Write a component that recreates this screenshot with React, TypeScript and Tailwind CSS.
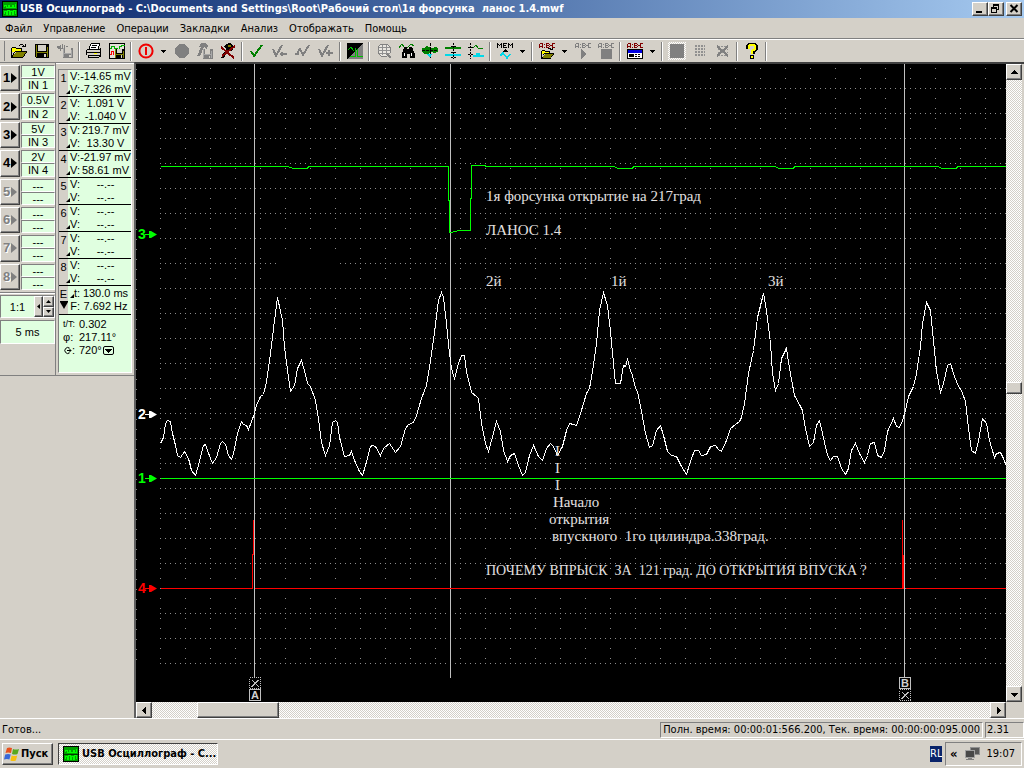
import React from "react";

const raised =
  "border border-t-white border-l-white border-b-[#404040] border-r-[#404040] shadow-[inset_-1px_-1px_0_#808080] bg-[#d4d0c8]";
const sunken = "border border-t-[#808080] border-l-[#808080] border-b-white border-r-white";
const dither = "bg-[repeating-conic-gradient(#ffffff_0_25%,#d4d0c8_0_50%)] bg-[length:2px_2px]";

/* ---------- icons ---------- */

function Icon({ children, size = 16 }: { children: React.ReactNode; size?: number }) {
  return (
    <svg width={size} height={size} viewBox="0 0 16 16" shapeRendering="crispEdges" fill="none" className="shrink-0" aria-hidden="true">
      {children}
    </svg>
  );
}

function Floppy({ c = "#000", fill = "#808000", x = 0, y = 0, s = 1 }: { c?: string; fill?: string; x?: number; y?: number; s?: number }) {
  return (
    <g transform={`translate(${x} ${y}) scale(${s})`}>
      <path d="M1 1h14v14H2l-1-1z" fill={c} />
      <path d="M2 2h1v12H2zM13 4h1v10h-1z M3 9h10v1H3z" fill={fill} />
      <path d="M4 2h8v6H4z" fill="#d4d0c8" />
      <path d="M10 11h2v3h-2z" fill="#d4d0c8" />
    </g>
  );
}

const abc = (c: string) => (
  <path
    fill={c}
    d="M1 0h2v1H1zM0 1h1v4H0zM3 0h1v5H3zM0 3h4v1H0zM5 1h1v1H5zM5 4h1v1H5zM7 0h1v5H7zM8 0h2v1H8zM8 2h2v1H8zM8 4h2v1H8zM10 1h1v1h-1zM10 3h1v1h-1zM11 2h2v1h-2zM13 0h3v1h-3zM13 0h1v5h-1zM13 4h3v1h-3z"
  />
);

const openFolder = (
  <>
    <path d="M1 5h4l1 1h5v3H1z" fill="#ffff00" />
    <path d="M1 4h4v1h6v4h-1V6H5V5H1zM0 5h1v9H0z" fill="#000" />
    <path d="M5 9h11l-4 5H1z" fill="#808000" />
    <path d="M4 8h12v1H4zM3 9h1v1H3zM2 10h1v2H2zM1 12h1v2H1zM0 14h12v1H0zM15 9h1v1h-1zM14 10h1v1h-1zM13 11h1v2h-1zM12 13h1v1h-1z" fill="#000" />
    <path d="M9 1h3v1H9zM8 2h1v1H8zM12 2h1v1h-1zM11 3h4v1h-4zM14 1h1v3h-1z" fill="#000" />
  </>
);

const icons: Record<string, React.ReactNode> = {
  open: openFolder,
  save: <Floppy />,
  saveAs: (
    <>
      <path d="M0 3h4v2H0zM3 2h1v6H3zM5 1h1v4H5zM7 2h1v4H7zM1 5h6v1H1zM9 3h2v1H9z" fill="#808080" />
      <Floppy c="#808080" fill="#a8a8a8" x={5} y={4} s={0.72} />
    </>
  ),
  print: (
    <>
      <path d="M5 1h8v1l-1 4H3z" fill="#fff" />
      <path d="M5 0h9v1H5zM4 1h1v2H4zM3 3h1v3H3zM13 1h1v2h-1zM12 3h1v3h-1zM6 2h5v1H6zM5 4h5v1H5z" fill="#000" />
      <path d="M1 6h13v6H1z" fill="#d4d0c8" />
      <path d="M1 6h13v1H1zM0 7h1v5H0zM14 5h1v7h-1zM0 9h15v1H0zM2 12h12v1H2zM2 13h1v1H2zM2 14h11v1H2zM13 12h2v2h-2z" fill="#000" />
      <path d="M8 10h3v1H8z" fill="#ffff00" />
    </>
  ),
  printSave: (
    <>
      <path d="M0 0h16v16H0z" fill="#000" />
      <path d="M1 1h14v14H1z" fill="#e4e0d8" />
      <path d="M1 5.500h1.500v-2h3v2h3v1h2v-3h2v-1h3" stroke="#00b000" />
      <path d="M1 11.500h1.500v-3h2v3" stroke="#ff0000" />
      <Floppy x={5} y={5} s={0.68} />
    </>
  ),
  power: (
    <g shapeRendering="auto">
      <circle cx="8" cy="8" r="6.6" stroke="#f00000" strokeWidth="2" />
      <path d="M8 4v8" stroke="#f00000" strokeWidth="2" />
    </g>
  ),
  record: <circle cx="8" cy="8" r="7" fill="#808080" />,
  hammer: (
    <>
      <path d="M4 0h4l3 3-1 3-3-2-4 9H0l4-9H2z" fill="#808080" />
      <Floppy c="#808080" fill="#a8a8a8" x={5} y={5} s={0.7} />
    </>
  ),
  hammerX: (
    <>
      <path d="M6 1l4-1 4 4-2 4-3-2-5 9H1l5-9-2-2z" fill="#000" />
      <path d="M8 2h3v2H8zM5 8h2v2H5z" fill="#808000" />
      <path d="M1 4l13 11M15 3L2 13" stroke="#800000" strokeWidth="2" />
    </>
  ),
  check: <path d="M2 8l3 5 8-11" stroke="#008000" strokeWidth="2" />,
  check1: (
    <g stroke="#808080" strokeWidth="2">
      <path d="M1 6l3 7 6-11" />
      <path d="M8 11h7M10 9v4" />
    </g>
  ),
  check2: (
    <g stroke="#808080" strokeWidth="2">
      <path d="M0 11h4M2 11l3-6" />
      <path d="M5 6l3 6 6-10" />
    </g>
  ),
  check3: (
    <g stroke="#808080" strokeWidth="2">
      <path d="M1 6l3 7 6-11" />
      <path d="M8 10h7M11 7v6" />
    </g>
  ),
  invert: (
    <>
      <path d="M0 0h16v16H0z" fill="#000" />
      <path d="M16 0v16H0z" fill="#808080" />
      <path d="M1 7l3-3 3 4M3 13.500h5.500V5M10.500 6v7.500h5" stroke="#00c000" />
    </>
  ),
  globe: (
    <>
      <path d="M5 1h6l3 3v6l-3 3H5l-3-3V4z" stroke="#808080" fill="#e8e6e0" />
      <path d="M3 4.500h11M2 7.500h12M3 10.500h11M6.500 2v10M10.500 2v10" stroke="#909090" />
      <path d="M11 11l4 4" stroke="#808080" strokeWidth="2" />
    </>
  ),
  find: (
    <>
      <path d="M0 5l3-4 3 4 3-1 3-3 3 2" stroke="#008000" />
      <path d="M5 4h3v2h2V4h3l3 7v4h-5v-4H8v4H3v-4z" fill="#000" />
      <path d="M5 10h1v3H5zM12 10h1v3h-1z" fill="#fff" />
    </>
  ),
  spread: (
    <>
      <path d="M0 5h3l1-2 3 1 2 1h2l2-1 3 1v4l-4 1-3-1-3 2H2L0 8z" fill="#008000" />
      <path d="M0 7.500h16M8.500 0v16" stroke="#000" strokeDasharray="3 1" />
      <path d="M5 11h5l-2 4z" fill="#00d8e8" />
    </>
  ),
  levels: (
    <>
      <path d="M0 5h16" stroke="#008000" strokeWidth="2" />
      <path d="M0 12h16" stroke="#00d8e8" strokeWidth="2" />
      <path d="M8.500 0v16M6 3.500h5M6 9.500h5M6 14.500h5" stroke="#000" strokeDasharray="2 1" />
    </>
  ),
  waves: (
    <>
      <path d="M2.500 0v16M0 4.500h5M0 11.500h5" stroke="#000" strokeDasharray="2 1" />
      <path d="M5 5l3-3 3 4 4-1" stroke="#008000" />
      <path d="M5 13h4v-2h2v2h5" stroke="#00d8e8" strokeWidth="2" />
    </>
  ),
  mem: (
    <>
      <path d="M0 0h1v5H0zM1 1h1v1H1zM2 2h1v1H2zM3 1h1v1H3zM4 0h1v5H4zM6 0h4v1H6zM6 0h1v5H6zM6 2h3v1H6zM6 4h4v1H6zM11 0h1v5h-1zM12 1h1v1h-1zM13 2h1v1h-1zM14 1h1v1h-1zM15 0h1v5h-1z" fill="#000" />
      <path d="M8 6l3 3H5z" fill="#000" />
      <path d="M3 13l3-3 4 5 3-4" stroke="#00d8e8" strokeWidth="1.500" />
    </>
  ),
  abcOpen: (
    <>
      {abc("#800000")}
      <g transform="translate(2 4) scale(.8)">{openFolder}</g>
    </>
  ),
  abcPlay: (
    <>
      {abc("#808080")}
      <path d="M6 6l6 5-6 5z" fill="#808080" />
    </>
  ),
  abcStop: (
    <>
      {abc("#808080")}
      <path d="M3 6h11v10H3z" fill="#808080" />
    </>
  ),
  abcPanel: (
    <>
      {abc("#800000")}
      <path d="M0 6h16v10H0z" fill="#000" />
      <path d="M1 7h14v3H1z" fill="#0000e0" />
      <path d="M1 10h14v5H1z" fill="#fff" />
      <path d="M2 11h5v3H2zM8 11h2v1H8zM11 11h2v1h-2zM8 13h2v1H8zM11 13h2v1h-2z" fill="#000" />
    </>
  ),
  block: <path d="M1 1h14v14H1z" fill="#808080" />,
  hatch: <path d="M3 3h10M3 6h10M3 9h10M3 12h10" stroke="#909090" strokeWidth="2" strokeDasharray="2 1" />,
  hatchX: (
    <>
      <path d="M3 3.500h10M3 6.500h10M3 9.500h10M3 12.500h10" stroke="#909090" strokeDasharray="2 1" />
      <path d="M2 3l11 10M13 3L2 13" stroke="#808080" strokeWidth="2" />
    </>
  ),
  help: (
    <>
      <path d="M4 6V3l2-2h4l2 2v3L9 9v2" stroke="#000" strokeWidth="4" />
      <path d="M5 6V3l1-1h4l1 1v3L8 8v3" stroke="#ffff00" strokeWidth="2" />
      <path d="M6 12h4v4H6z" fill="#000" />
      <path d="M7 13h2v2H7z" fill="#ffff00" />
    </>
  ),
  app: (
    <>
      <path d="M0 0h16v16H0z" fill="#000" />
      <path d="M1 1h14v14H1z" fill="#00a000" />
      <path d="M2 6V4h2v2h2V4h1v2h3V4h1v2h2V3M2 13v-3h2v3h1v-4h2v4h1v-3h2v3h1v-4h2v4" stroke="#00ff00" />
      <path d="M1 8h14" stroke="#003800" />
    </>
  ),
};

const toolbar: Array<[string, string] | "|" | "v"> = [
  ["open", "Открыть"], ["save", "Сохранить"], ["saveAs", "Сохранить как"], "|",
  ["print", "Печать"], ["printSave", "Сохранить изображение"], "|",
  ["power", "Пуск"], "v", ["record", "Запись"], ["hammer", "Настройки"], ["hammerX", "Сброс"], "|",
  ["check", "Закладка"], ["check1", "Удалить закладку"], ["check2", "Предыдущая закладка"], ["check3", "Следующая закладка"], "|",
  ["invert", "Инверсия"], "|",
  ["globe", "Масштаб"], ["find", "Поиск"], ["spread", "Растянуть"], ["levels", "Уровни"], ["waves", "Разделить"], "|",
  ["mem", "Память"], "v", "|",
  ["abcOpen", "Открыть анализатор"], "v", ["abcPlay", "Старт анализа"], ["abcStop", "Стоп анализа"], "|",
  ["abcPanel", "Панель анализа"], "v", "|",
  ["block", "Сплошной"], ["hatch", "Сетка"], ["hatchX", "Без сетки"], "|",
  ["help", "Справка"], "|",
];

/* ---------- data ---------- */

const channels = [
  ["1V", "IN 1"], ["0.5V", "IN 2"], ["5V", "IN 3"], ["2V", "IN 4"],
  ["---", "---"], ["---", "---"], ["---", "---"], ["---", "---"],
];

const readings = [
  ["-14.65 mV", "-7.326 mV"], ["1.091 V", "-1.040 V"], ["219.7 mV", "13.30 V"], ["-21.97 mV", "58.61 mV"],
  ["--.--", "--.--"], ["--.--", "--.--"], ["--.--", "--.--"], ["--.--", "--.--"],
];

const pressure =
  "160,443 163,437 165,423 167,420 170,421 172,433 175,445 177,455 180,457 184,451 188,458 191,470 195,475 197,468 200,457 203,445 205,444 207,450 212,463 216,457 220,443 222,441 225,444 228,455 231,459 233,453 237,433 241,421 243,424 246,425 248,429 251,421 254,413 256,405 260,396 263,394 266,381 270,353 274,320 277,297 282,320 284,347 288,377 290,391 294,385 297,368 301,360 304,370 307,383 310,386 315,400 318,418 321,442 325,455 329,445 332,422 335,420 337,422 339,437 344,456 349,455 351,451 354,460 359,471 362,475 365,465 370,446 372,445 375,446 380,455 383,448 389,443 395,452 400,446 405,428 408,424 413,422 416,415 421,398 426,385 430,360 434,332 438,300 441,292 443,297 446,323 449,353 451,368 454,378 458,363 461,355 464,355 466,371 471,392 476,396 478,398 481,423 485,443 488,451 491,440 496,421 500,431 503,450 507,461 510,455 514,453 518,465 522,475 525,472 529,455 533,445 538,456 542,460 546,448 550,443 553,446 557,455 562,446 566,430 569,423 573,424 576,425 580,413 586,393 589,388 592,371 596,343 599,310 603,292 607,305 610,331 613,363 615,383 620,383 623,365 625,366 627,359 630,370 632,375 635,388 637,391 641,411 645,433 649,447 652,445 656,430 660,425 663,435 667,451 671,455 676,456 681,466 686,474 690,461 694,450 698,450 701,455 706,454 710,446 715,445 718,449 721,451 726,440 730,428 735,424 739,421 741,417 744,403 748,373 753,350 757,317 763,293 766,310 770,343 772,373 775,390 778,383 781,358 786,348 789,368 794,395 800,406 802,410 805,428 809,446 813,442 816,425 819,420 822,433 827,455 830,460 833,456 837,456 841,468 845,474 848,468 851,450 855,443 859,453 864,462 867,455 870,443 874,442 877,455 881,457 884,450 887,431 893,418 896,426 899,427 902,420 905,410 908,396 913,386 916,373 920,346 922,323 926,302 930,310 933,340 936,371 940,392 943,383 947,365 950,363 954,376 958,386 961,390 965,401 968,428 971,450 975,453 978,440 982,418 986,423 989,440 994,457 996,453 1000,452 1003,458 1006,466";

const injector =
  "160,166 287,166 293,168 307,168 308,166 448,166 448,200 449,200 449,232 451,232 458,230 470,230 470,198 471,198 471,165 485,165 485,166 613,166 618,168 632,168 633,166 774,166 779,168 793,168 794,166 937,166 942,168 956,168 957,166 1006,166";

const notes: Array<[number, number, string]> = [
  [486, 201, "1я форсунка открытие на 217град"],
  [486, 235, "ЛАНОС 1.4"],
  [486, 286, "2й"],
  [611, 286, "1й"],
  [768, 286, "3й"],
  [555, 456, "I"],
  [555, 473, "I"],
  [555, 490, "I"],
  [553, 507, "Начало"],
  [549, 524, "открытия"],
  [552, 541, "впускного  1го цилиндра.338град."],
];

const question: [number, number, string] = [486, 575, "ПОЧЕМУ ВПРЫСК  ЗА  121 град. ДО ОТКРЫТИЯ ВПУСКА ?"];

const markers: Array<[number, string, string]> = [
  [234, "3", "#00ff00"], [414, "2", "#ffffff"], [478, "1", "#00ff00"], [588, "4", "#ff0000"],
];

function Flag({ x, y, label }: { x: number; y: number; label?: string }) {
  return (
    <g>
      <g stroke="#c0c0c0" fill="none" shapeRendering="crispEdges">
        <rect x={x + 0.5} y={y + 0.5} width="11" height="11" rx={label ? 1 : 0} strokeDasharray={label ? undefined : "1 1"} />
        {!label && <path d={`M${x + 3} ${y + 3}l7 7M${x + 9.5} ${y + 3}l-7 7`} />}
      </g>
      {label && (
        <text x={x + 6} y={y + 10} textAnchor="middle" fill="#d0d0d0" className="font-['Liberation_Sans',sans-serif] text-[11px] font-bold">
          {label}
        </text>
      )}
    </g>
  );
}

function Scope() {
  return (
    <svg className="block h-full w-full bg-black" role="img" aria-label="Осциллограмма">
      <defs>
        <pattern id="grid" x="160" y="88" width="25" height="50" patternUnits="userSpaceOnUse">
          <path
            fill="#8c8c8c"
            d="M0 0h1v1H0zM5 0h1v1H5zM10 0h1v1H10zM15 0h1v1H15zM20 0h1v1H20zM0 25h1v1H0zM5 25h1v1H5zM10 25h1v1H10zM15 25h1v1H15zM20 25h1v1H20zM0 10h1v1H0zM0 20h1v1H0zM0 30h1v1H0zM0 40h1v1H0z"
          />
        </pattern>
        <pattern id="ruler" x="136" y="64" width="10" height="10" patternUnits="userSpaceOnUse">
          <path fill="#808080" d="M0 5h1v1H0z" />
        </pattern>
      </defs>
      <g transform="translate(-136 -64)">
        <rect x="160" y="64" width="100%" height="600" fill="url(#grid)" />
        <rect x="136" y="64" width="1" height="600" fill="url(#ruler)" />
        <rect x="278" y="250" width="58" height="33" fill="#000" />
        <g shapeRendering="crispEdges" fill="none" strokeWidth="1">
          <path d="M254.500 64V678M450.500 64V678M904.500 64V678" stroke="#c0c0c0" />
          <g transform="translate(.5 .5)">
            <polyline points={injector} stroke="#00ff00" />
            <path d="M160 478H3000" stroke="#00ff00" />
            <path d="M160 588H252V554H253V519M254 588H902V554H902V519M903 554V588M905 588H3000" stroke="#ff0000" />
            <polyline points={pressure} stroke="#ffffff" />
          </g>
        </g>
        {markers.map(([y, n, c]) => (
          <g key={n} fill={c}>
            <text x="138" y={y + 5} className="font-['Liberation_Sans',sans-serif] text-[14px] font-bold">{n}</text>
            <path d={`M145 ${y}h4v-3h2l6 3.500-6 3.500h-2v-3h-4z`} />
          </g>
        ))}
        <g fill="#e4e0e0" className="font-['Liberation_Serif',serif]">
          {notes.map(([x, y, t]) => (
            <text key={`${x}-${y}`} x={x} y={y} className="text-[15px] whitespace-pre">{t}</text>
          ))}
          <text x={question[0]} y={question[1]} className="text-[14px] whitespace-pre">{question[2]}</text>
        </g>
        <Flag x={249} y={677} />
        <Flag x={249} y={689} label="A" />
        <Flag x={899} y={677} label="B" />
        <Flag x={899} y={689} />
      </g>
    </svg>
  );
}

function Arrow({ dir }: { dir: "up" | "down" | "left" | "right" }) {
  const d = {
    up: "M0 5h7L3.500 1z",
    down: "M0 2h7L3.500 6z",
    left: "M5 0v7L1 3.500z",
    right: "M2 0v7l4-3.500z",
  }[dir];
  return (
    <svg width="7" height="7" viewBox="0 0 7 7" shapeRendering="crispEdges" className="shrink-0" aria-hidden="true">
      <path d={d} fill="#000" />
    </svg>
  );
}

function ScrollButton({ dir, label }: { dir: "up" | "down" | "left" | "right"; label: string }) {
  return (
    <button aria-label={label} className={`flex size-4 shrink-0 items-center justify-center ${raised}`}>
      <Arrow dir={dir} />
    </button>
  );
}

function DeltaLabel({ children, delta }: { children: React.ReactNode; delta?: boolean }) {
  return (
    <span className="flex w-3 shrink-0 items-end justify-end">
      {delta && (
        <svg width="4" height="4" viewBox="0 0 4 4" className="mb-0.5 shrink-0" aria-hidden="true">
          <path d="M4 0v4H0z" fill="#000" />
        </svg>
      )}
      {children}
    </span>
  );
}

/* ---------- panels ---------- */

function ChannelPanel() {
  return (
    <div className="flex w-[56px] flex-col border-r border-[#808080] font-['Liberation_Sans',sans-serif] text-[11px] leading-3">
      <div className="grid h-[227px] grid-rows-8 gap-y-0.5 pt-0.5">
        {channels.map(([range, input], i) => (
          <div key={i} className="flex gap-px">
            <button
              className={`flex w-5 items-center justify-center text-[13px] font-bold ${raised} ${i < 4 ? "text-black" : "text-[#808080] [text-shadow:1px_1px_0_#fff]"}`}
            >
              {i + 1}
              <svg width="6" height="10" viewBox="0 0 6 10" className="ml-px shrink-0" aria-hidden="true">
                <path d="M0 0v10l6-5z" fill="currentColor" />
              </svg>
            </button>
            <div className="flex flex-1 flex-col text-center">
              <div className={`min-h-0 flex-1 bg-[#e0ffe0] ${sunken}`}>{range}</div>
              <div className={`min-h-0 flex-1 bg-[#e0ffe0] ${sunken}`}>{input}</div>
            </div>
          </div>
        ))}
      </div>
      <div className="mt-0.5 border-t border-b border-t-[#808080] border-b-white" />
      <div className={`mt-px flex h-[23px] bg-[#e0ffe0] ${sunken}`}>
        <span className="flex flex-1 items-center justify-center">1:1</span>
        <button aria-label="Сброс масштаба" className={`flex w-[9px] items-center justify-center ${raised}`}>
          <svg width="3" height="5" viewBox="0 0 3 5" className="shrink-0" aria-hidden="true"><path d="M3 0v5L0 2.500z" fill="#000" /></svg>
        </button>
        <div className="flex w-[11px] flex-col">
          <button aria-label="Больше" className={`flex flex-1 items-center justify-center ${raised}`}>
            <svg width="5" height="3" viewBox="0 0 5 3" aria-hidden="true"><path d="M0 3h5L2.500 0z" fill="#000" /></svg>
          </button>
          <button aria-label="Меньше" className={`flex flex-1 items-center justify-center ${raised}`}>
            <svg width="5" height="3" viewBox="0 0 5 3" aria-hidden="true"><path d="M0 0h5L2.500 3z" fill="#000" /></svg>
          </button>
        </div>
      </div>
      <div className={`mt-0.5 flex h-6 items-center justify-center bg-[#e0ffe0] ${sunken}`}>5 ms</div>
    </div>
  );
}

function ReadoutPanel() {
  return (
    <div className="flex flex-1 flex-col border-t border-white px-0.5 pt-[5px] pb-0.5 font-['Liberation_Sans',sans-serif] text-[11px]">
      <div className={`flex flex-1 flex-col bg-[#e0ffe0] leading-[13px] ${sunken}`}>
        {readings.map(([v, dv], i) => (
          <div key={i} className="flex h-[27px] border-b border-black">
            <div className="w-[9px] bg-[#d4d0c8] pt-0.5 text-center">{i + 1}</div>
            <div className="flex flex-1 flex-col whitespace-nowrap">
              <div className="flex"><DeltaLabel>V:</DeltaLabel><span className="flex-1 text-center">{v}</span></div>
              <div className="flex"><DeltaLabel delta>V:</DeltaLabel><span className="flex-1 text-center">{dv}</span></div>
            </div>
          </div>
        ))}
        <div className="flex h-[29px] border-b border-black whitespace-nowrap">
          <div className="flex w-[9px] flex-col items-center bg-[#d4d0c8] pt-0.5">
            E
            <svg width="8" height="8" viewBox="0 0 8 8" className="shrink-0" aria-hidden="true"><path d="M0 0h8v1L4 8 0 1z" fill="#000" /></svg>
          </div>
          <div className="flex flex-1 flex-col pt-px">
            <div className="flex"><DeltaLabel delta>t:</DeltaLabel><span className="flex-1 text-center">130.0 ms</span></div>
            <div className="flex"><DeltaLabel>F:</DeltaLabel><span className="flex-1 text-center">7.692 Hz</span></div>
          </div>
        </div>
        <div className="flex flex-col pt-[3px] pl-1">
          <div className="flex gap-1"><span className="w-3 whitespace-nowrap text-[9px]">t/T:</span><span>0.302</span></div>
          <div className="flex gap-1"><span className="w-3">φ:</span><span>217.11°</span></div>
          <div className="flex items-center gap-1">
            <span className="flex w-3 items-center">
              <svg width="9" height="9" viewBox="0 0 9 9" fill="none" stroke="#000" className="shrink-0" aria-hidden="true">
                <path d="M6.500 2A3 3 0 1 0 6.500 7M4 4.500h4M6 2.500l2 2-2 2" />
              </svg>:
            </span>
            <span className="flex items-center gap-px">
              720°
              <button aria-label="Период" className="flex h-[9px] w-[11px] items-center justify-center rounded-[2px] border border-black">
                <Arrow dir="down" />
              </button>
            </span>
          </div>
        </div>
      </div>
    </div>
  );
}

export default function App() {
  return (
    <div className="flex h-screen flex-col overflow-hidden bg-[#d4d0c8] font-['DejaVu_Sans_Condensed','DejaVu_Sans',sans-serif] text-[11px] text-black">
      <header className="flex h-[18px] shrink-0 items-center gap-0.5 bg-linear-to-r from-[#0a246a] to-[#a6caf0] pr-0.5 pl-0.5 text-white">
        <Icon>{icons.app}</Icon>
        <h1 className="flex-1 truncate font-bold whitespace-pre">USB Осциллограф - C:\Documents and Settings\Root\Рабочий стол\1я форсунка  ланос 1.4.mwf</h1>
        <div className="flex">
          <button aria-label="Свернуть" className={`h-3.5 w-4 ${raised}`}>
            <svg width="14" height="12" viewBox="0 0 14 12" aria-hidden="true"><path d="M3 8h6v2H3z" fill="#000" /></svg>
          </button>
          <button aria-label="Восстановить" className={`h-3.5 w-4 ${raised}`}>
            <svg width="14" height="12" viewBox="0 0 14 12" shapeRendering="crispEdges" aria-hidden="true">
              <path d="M4 1h6v2H4zM4 3h1v1H4zM9 3h1v4H9zM8 6h1v1H8zM2 4h6v2H2zM2 6h1v4H2zM7 6h1v4H7zM2 9h6v1H2z" fill="#000" />
            </svg>
          </button>
          <button aria-label="Закрыть" className={`ml-0.5 h-3.5 w-4 ${raised}`}>
            <svg width="14" height="12" viewBox="0 0 14 12" aria-hidden="true"><path d="M3.500 2l7 7M10.500 2l-7 7" stroke="#000" strokeWidth="2" /></svg>
          </button>
        </div>
      </header>

      <nav className="flex h-[21px] shrink-0 items-center gap-[11px] border-b border-[#808080] pt-0.5 pl-[5px]">
        {["Файл", "Управление", "Операции", "Закладки", "Анализ", "Отображать", "Помощь"].map((m) => (
          <button key={m}>{m}</button>
        ))}
      </nav>

      <div className="flex h-[23px] shrink-0 items-center border-t border-white pl-1" role="toolbar">
        <span className="mr-0.5 h-5 w-px bg-[#808080]" />
        {toolbar.map((t, i) =>
          t === "|" ? (
            <span key={i} className="mx-0.5 h-[19px] w-0.5 border-l border-[#808080] bg-white" />
          ) : t === "v" ? (
            <button key={i} aria-label="Список" className="flex w-[13px] justify-center">
              <svg width="5" height="3" viewBox="0 0 5 3" shapeRendering="crispEdges" aria-hidden="true"><path d="M0 0h5L2.500 3z" fill="#000" /></svg>
            </button>
          ) : (
            <button key={i} aria-label={t[1]} className="flex h-5 w-[23px] items-center justify-center">
              <span className={t[0] === "block" ? `p-px ${dither}` : ""}>
                <Icon>{icons[t[0]]}</Icon>
              </span>
            </button>
          )
        )}
      </div>

      <main className="flex min-h-0 flex-1">
        <aside className="flex w-[134px] shrink-0 flex-col border-t border-[#808080]">
          <div className="flex h-[313px] border-b border-[#808080]">
            <ChannelPanel />
            <ReadoutPanel />
          </div>
        </aside>
        <section className="flex min-w-0 flex-1 flex-col border-t-2 border-l-2 border-[#404040] border-l-[#606060]">
          <div className="flex min-h-0 flex-1">
            <div className="min-w-0 flex-1"><Scope /></div>
            <div className={`mr-0.5 flex w-4 flex-col ${dither}`}>
              <ScrollButton dir="up" label="Вверх" />
              <div className="grow-[303] basis-0" />
              <div className={`h-3 ${raised}`} />
              <div className="grow-[292] basis-0" />
              <ScrollButton dir="down" label="Вниз" />
            </div>
          </div>
          <div className="flex">
            <div className={`flex flex-1 ${dither}`}>
              <ScrollButton dir="left" label="Влево" />
              <div className="grow-[45] basis-0" />
              <div className={`w-[82px] ${raised}`} />
              <div className="grow-[711] basis-0" />
              <ScrollButton dir="right" label="Вправо" />
            </div>
            <div className="w-[18px]" />
          </div>
        </section>
      </main>

      <footer className="flex h-[21px] shrink-0 items-center gap-0.5 border-t border-white pt-0.5">
        <span className="flex-1 pl-0.5">Готов...</span>
        <span className={`h-4 px-0.5 leading-[14px] whitespace-pre ${sunken}`}>Полн. время: 00:00:01:566.200, Тек. время: 00:00:00:095.000</span>
        <span className={`h-4 w-[39px] px-px leading-[14px] ${sunken}`}>2.31</span>
      </footer>

      <div className="flex h-[29px] shrink-0 items-center gap-[5px] border-t border-white px-0.5">
        <button className={`flex h-[22px] w-[51px] items-center gap-px px-px font-bold ${raised}`}>
          <svg width="16" height="16" viewBox="0 0 16 16" className="shrink-0" aria-hidden="true">
            <path d="M3 2q2-1 5 0L7 7Q4 6 1.500 7z" fill="#e8501c" />
            <path d="M9 3q3 1 6 0l-1.500 5Q11 9 8 8z" fill="#58a820" />
            <path d="M1.200 8.500q3-1 5.500 0l-1.300 5Q3 12.500 0 13.500z" fill="#3868d8" />
            <path d="M7.700 9.500q3 1 5.500 0l-1.300 5q-3 1-5.500 0z" fill="#f8c010" />
          </svg>
          Пуск
        </button>
        <button className={`flex h-[22px] w-40 items-center gap-[3px] overflow-hidden border border-t-[#404040] border-l-[#404040] border-r-white border-b-white pl-1 font-bold whitespace-nowrap ${dither}`}>
          <Icon>{icons.app}</Icon>
          USB Осциллограф - С...
        </button>
        <span className="flex-1" />
        <span className="flex h-4 w-3 items-center overflow-hidden bg-[#0a246a] text-white">RL</span>
        <div className={`-ml-0.5 flex h-6 w-[77px] items-center justify-between px-1.5 ${sunken}`}>
          <button aria-label="Показать значки" className="-ml-0.5 text-[13px] font-bold">«</button>
          <svg width="17" height="16" viewBox="0 0 17 16" aria-hidden="true">
            <path d="M6 1h10v8H6z" fill="#909090" /><path d="M7 2h8v6H7z" fill="#585858" />
            <path d="M1 4h10v8H1z" fill="#a0a0a0" /><path d="M2 5h8v6H2z" fill="#484848" />
            <path d="M4 12h4v1H4zM2 13h8v1H2z" fill="#808080" />
          </svg>
          <span>19:07</span>
        </div>
      </div>
    </div>
  );
}
